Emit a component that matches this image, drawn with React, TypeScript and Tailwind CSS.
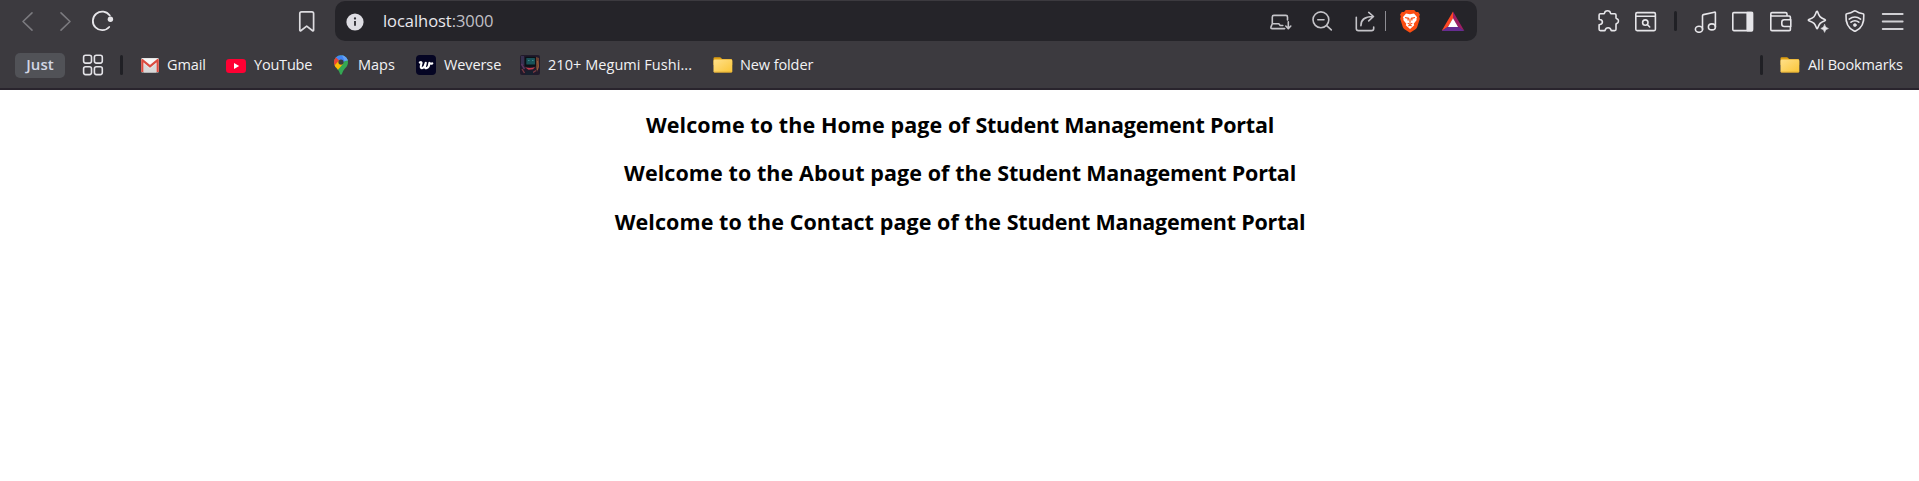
import type { ReactNode } from "react";

type IconProps = { children: ReactNode; className?: string };

/** 24px outlined toolbar icon. */
function Icon({ children, className = "" }: IconProps) {
  return (
    <svg
      viewBox="0 0 24 24"
      className={`h-6 w-6 shrink-0 ${className}`}
      fill="none"
      stroke="currentColor"
      strokeWidth="1.6"
      strokeLinecap="round"
      strokeLinejoin="round"
    >
      {children}
    </svg>
  );
}

function Divider({ className = "" }: { className?: string }) {
  return <div className={`h-5 w-[3px] shrink-0 rounded-sm bg-[#202025] ${className}`} />;
}

function Folder() {
  return (
    <svg viewBox="0 0 20 16" className="h-4 w-5 shrink-0">
      <defs>
        <linearGradient id="folder" x1="0" y1="0" x2="1" y2="1">
          <stop offset="0" stopColor="#ffe08a" />
          <stop offset="1" stopColor="#fac536" />
        </linearGradient>
      </defs>
      <path d="M.5 1.5Q.5.2 1.8.2h5q.8 0 1.2.6l1 1.2h9q1.2 0 1.2 1.3V8H.5z" fill="#dfa012" />
      <rect x=".5" y="2.6" width="18.8" height="13" rx="1.4" fill="url(#folder)" />
      <path d="M1 15.1h17.8" stroke="#dca52d" strokeWidth=".8" />
    </svg>
  );
}

function Label({ children, className }: { children: ReactNode; className: string }) {
  return (
    <span className={`shrink-0 whitespace-nowrap text-[14.5px] leading-5 text-[#f2f2f4] ${className}`}>
      {children}
    </span>
  );
}

function AddressBar() {
  return (
    <div className="ml-4 flex h-10 w-[1142px] shrink-0 items-center rounded-[10px] bg-[#252429] text-[#c4c3c8]">
      <svg viewBox="0 0 18 18" className="ml-[11px] mt-[2px] h-[18px] w-[18px] shrink-0">
        <circle cx="9" cy="9" r="8.6" fill="#dedde3" />
        <path d="M9 8v4.8" stroke="#333238" strokeWidth="1.9" />
        <circle cx="9" cy="5.5" r="1.15" fill="#333238" />
      </svg>
      <span className="ml-[19px] mb-px w-28 shrink-0 whitespace-nowrap text-[16.5px] leading-6 tracking-[-0.05px] text-[#e9e8ed]">
        localhost<span className="text-[#c1c0c6]">:3000</span>
      </span>
      <Icon className="ml-auto">
        <path d="M4.3 14.8V8q0-1.600 1.600-1.600h12q1.600 0 1.600 1.600v3M4.300 14.800h6.500l1.400 1.700h2.600M4.300 14.800L3 17.900q-.5 1.700 1.200 1.700h12.500" />
        <path d="M20.300 12.800v6.600M17.800 17l2.500 2.600 2.500-2.600" />
      </Icon>
      <Icon className="ml-[18px]">
        <circle cx="10.900" cy="10.800" r="7.900" />
        <path d="M7.800 10.800h6.200M16.700 16.700l4.600 4.200" />
      </Icon>
      <Icon className="ml-[19px]">
        <path d="M3.300 8.300v11.100q0 2.200 2.200 2.200h13q2.200 0 2.200-2.200v-1.300" />
        <path d="M7.900 16.800c0-6 3-9.300 12.200-9.300M15.700 3.400l4.800 4.100-4.800 4.400" />
      </Icon>
      <div className="ml-2 h-5 w-px bg-[#8e8d93]" />
      <svg viewBox="0 0 24 24" className="ml-3 h-6 w-6 shrink-0">
        <path
          d="M7.8 1h8.400l1.800 2h2.200l1.700 2.600-.7 2 .6 2.200-2.600 8.300q-.5 1.400-1.700 2.200L12 23.800l-5.500-3.500q-1.200-.8-1.700-2.200L2.200 9.800l.6-2.200-.7-2L3.800 3H6z"
          fill="#fb4d12"
        />
        <path
          d="M8 4.400l4 .8 4-.8 3.100 3.900-.7 1.500.3 1.300-3 3.700.5 1.400-1.400 1.200L12 20l-2.800-2.600-1.400-1.200.5-1.400-3-3.700.3-1.300-.7-1.500z"
          fill="#fff"
        />
        <path
          d="M7 8.500l3.400.8-.5 2.200M17 8.500l-3.400.8.5 2.200M12 9.500v4.200M9.700 14.200l2.300 1 2.300-1M10.400 17l1.600-1.100 1.600 1.100"
          fill="none"
          stroke="#fb4d12"
          strokeWidth="1.200"
        />
      </svg>
      <svg viewBox="0 0 24 24" className="ml-[19px] mr-3 h-6 w-6 shrink-0">
        <path d="M12 2.400v7.100l-5.300 8.800L.6 22z" fill="#ff4724" />
        <path d="M12 2.400v7.100l5.300 8.800 6.100 3.700z" fill="#9e1f63" />
        <path d="M.6 22l6.100-4.200h10.600l6.100 4.200z" fill="#662d91" />
        <path d="M12 9.300l5.100 8.700H6.900z" fill="#fff" />
      </svg>
    </div>
  );
}

function Toolbar() {
  return (
    <div className="flex h-[42px] items-center text-[#e6e5e9]">
      <Icon className="ml-[15px] text-[#7b7a7f]">
        <path d="M17 3.800L8 12.500l9 8.700" />
      </Icon>
      <Icon className="ml-[15px] text-[#7b7a7f]">
        <path d="M7 3.800l9 8.700-9 8.700" />
      </Icon>
      <Icon className="ml-3">
        <path d="M19.200 18a9.300 9.300 0 1 1 .6-11.400" strokeWidth="1.800" />
        <circle cx="20.400" cy="10.200" r="2.700" fill="currentColor" stroke="none" />
      </Icon>
      <Icon className="ml-[181px] text-[#dddce0]">
        <path d="M4.800 4.600q0-1.700 1.700-1.700h10.400q1.700 0 1.700 1.700v16.300q0 1.600-1.300.6l-5.600-4.300-5.600 4.300q-1.300 1-1.300-.6z" strokeWidth="1.700" />
      </Icon>
      <AddressBar />
      <Icon className="ml-[119px]">
        <path d="M4.400 4.800h3.400q.6 0 .7-.7C8.700 2.700 9.800 1.800 11.500 1.800s2.800.9 3 2.300q.1.700.7.700h3.500q1.300 0 1.300 1.300v2.700q0 .6.600.8c1.200.3 1.900 1.200 1.900 2.500s-.7 2.200-1.900 2.500q-.6.200-.6.800v4.900q0 1.300-1.300 1.300h-3q-.6 0-.7-.6c-.3-1.500-1.300-2.300-2.900-2.300s-2.600.8-2.900 2.300q-.1.600-.7.600H4.400q-1.300 0-1.300-1.300v-4.200q0-.6.600-.6c1.700-.2 2.700-1 2.700-2.500s-1-2.300-2.700-2.500q-.6 0-.6-.6V6.100q0-1.300 1.300-1.300z" />
      </Icon>
      <Icon className="ml-[14px]">
        <rect x="1.800" y="3.600" width="19.600" height="18" rx="1.300" />
        <path d="M2 7.300h19.200" />
        <circle cx="11.300" cy="13.600" r="2.700" />
        <path d="M13.500 15.800l2.200 2.200" />
      </Icon>
      <Divider className="ml-4" />
      <Icon className="ml-[17px]">
        <ellipse cx="5" cy="20.300" rx="3.600" ry="3" />
        <ellipse cx="17.900" cy="17.900" rx="3.500" ry="3" />
        <path d="M8.500 20.300V6.700q0-.9.900-1.100l11-2.400q1-.2 1 .7v14" />
      </Icon>
      <Icon className="ml-[13px]">
        <rect x="1.800" y="3.600" width="19.600" height="18" rx="1" />
        <path d="M16.200 3.600h5.200v18h-5.200z" fill="currentColor" />
      </Icon>
      <Icon className="ml-[14px]">
        <path d="M21.400 10.700V8.200q0-1.200-1.200-1.200H3.200q-1.400 0-1.400-1.600v-.6q0-1.200 1.200-1.200h13.500q1.500 0 1.500 1.500V7M1.800 5.400v15q0 1.200 1.200 1.200h17.200q1.200 0 1.200-1.200v-2.600" />
        <path d="M21.800 10.800h-6.600q-2.400 0-2.400 2.400v1.900q0 2.400 2.400 2.400h6.600z" />
      </Icon>
      <Icon className="ml-[13px]">
        <path d="M10.400 2.800q.8-1 1.300.2c1.500 4.600 2.200 5.400 7.100 7.400q1.300.7 0 1.300c-4.700 1.900-5.400 2.800-7.200 7.500q-.5 1.100-1 0c-1.700-4.700-2.500-5.600-7.700-7.500q-1.200-.6 0-1.300C8 8.600 8.800 7.600 10.400 2.800z" />
        <path d="M18.600 15.600q.5 3.200 3.800 3.900-3.300.7-3.800 3.900-.5-3.200-3.800-3.900 3.300-.7 3.800-3.900z" fill="currentColor" strokeWidth=".6" />
      </Icon>
      <Icon className="ml-[13px]">
        <path d="M11.900 1.900q.6 0 1 .3c2 1.500 4.500 2.200 7 2.500q.9.100.9 1c.5 8.200-1.400 13.300-8.100 16.300q-.8.300-1.600 0C4.400 19 2.500 13.900 3 5.700q0-.9.900-1c2.500-.3 5-1 7-2.500q.4-.3 1-.3z" />
        <path d="M6.200 10.100q5.700-4.100 11.400 0M8 13.200q3.900-2.900 7.800 0" />
        <circle cx="11.900" cy="16.100" r="1.500" fill="currentColor" strokeWidth=".6" />
      </Icon>
      <Icon className="ml-[14px] text-[#d0cfd3]">
        <path d="M1.700 5h20M1.700 12.500h20M1.700 20h20" strokeWidth="1.800" />
      </Icon>
    </div>
  );
}

function BookmarksBar() {
  return (
    <div className="flex h-[46px] items-center">
      <div className="ml-[15px] flex h-[25px] w-[50px] shrink-0 items-center justify-center rounded-[5px] bg-[#515257] pb-0.5 text-[15px] font-semibold text-[#d2d6e4]">
        Just
      </div>
      <svg viewBox="0 0 22 22" className="ml-[17px] h-[22px] w-[22px] shrink-0" fill="none" stroke="#e4e3e8" strokeWidth="1.6">
        <rect x="1.600" y="1.200" width="7.900" height="7.900" rx="2" />
        <rect x="12.400" y="1.200" width="7.900" height="7.900" rx="2" />
        <rect x="1.600" y="12.700" width="7.900" height="7.900" rx="2" />
        <rect x="12.400" y="12.700" width="7.900" height="7.900" rx="2" />
      </svg>
      <Divider className="ml-4" />

      <svg viewBox="0 0 20 16" className="ml-[17px] h-4 w-5 shrink-0">
        <rect x="1" y="1" width="18" height="14.500" rx="1.500" fill="#e6e6e6" />
        <path d="M4 15.500V7l6 5 6-5v8.500z" fill="#d8d8d8" />
        <path d="M3 2h14l-7 6.200z" fill="#f6f6f6" />
        <path d="M2.300 15V3L10 9.400 17.700 3v12" fill="none" stroke="#dc4a3e" strokeWidth="2.200" strokeLinejoin="round" />
      </svg>
      <Label className="ml-[7px] w-[59px] tracking-[-0.1px]">Gmail</Label>

      <svg viewBox="0 0 20 14" className="mt-px h-[14px] w-5 shrink-0">
        <rect width="20" height="14" rx="3.300" fill="#ff0033" />
        <path d="M8 4l5.200 3L8 10z" fill="#fff" />
      </svg>
      <Label className="ml-2 w-[79px] tracking-[-0.2px]">YouTube</Label>

      <svg viewBox="0 0 16 20" className="h-5 w-4 shrink-0">
        <defs>
          <clipPath id="pin">
            <path d="M8 .2a7 7 0 0 1 7 7c0 4.300-3.200 5.800-4.800 8.700C9.300 17.500 9 19.800 8 19.800s-1.300-2.300-2.200-3.900C4.200 13 1 11.500 1 7.200a7 7 0 0 1 7-7z" />
          </clipPath>
        </defs>
        <g clipPath="url(#pin)">
          <path d="M0 0h16v20H0z" fill="#34a853" />
          <path d="M0 0h16v3L8 9 3 4z" fill="#4285f4" />
          <path d="M9 0h7v5.500l-4.500.5z" fill="#64a2f5" />
          <path d="M0 0l2.800 2.300L8 7 3 12.800 0 12z" fill="#ea4335" />
          <path d="M1 11l6-6.600 3.400 4.200L4.300 15.500 0 14z" fill="#fbbc04" />
        </g>
        <circle cx="8" cy="7.100" r="2.600" fill="#3c3a3f" />
      </svg>
      <Label className="ml-[9px] w-[57px]">Maps</Label>

      <svg viewBox="0 0 20 20" className="ml-px h-5 w-5 shrink-0">
        <rect width="20" height="20" rx="4" fill="#050523" />
        <path
          d="M3.800 7.500q1.900-.9 1.800.6l-.8 3q-.3 2.500 1.700 2 2.200-.8 3.300-5.300l-.8 3.500q-.3 2.400 1.700 1.800 2.600-1.100 2.700-5.200 1 1.200 2.900.5"
          fill="none"
          stroke="#fff"
          strokeWidth="2.100"
          strokeLinecap="round"
          strokeLinejoin="round"
        />
      </svg>
      <Label className="ml-2 w-[76px] tracking-[-0.1px]">Weverse</Label>

      <svg viewBox="0 0 20 20" className="h-5 w-5 shrink-0">
        <rect width="20" height="20" rx="2" fill="#211a2b" />
        <path d="M1 1h3v9H1z" fill="#37304f" />
        <path d="M16 2l3 1v9l-2 5-1.500-7z" fill="#6b4030" />
        <path d="M17.500 6l.8 5-1 4" stroke="#9a5d3b" fill="none" />
        <path d="M1.500 9l3 5" stroke="#5b3560" strokeWidth="1.600" fill="none" />
        <path d="M2 14l2.500 4M13 17.500l3-2" stroke="#7b3b42" strokeWidth="1.400" />
        <rect x="5" y="1.800" width="11" height="10" rx="1" fill="#0b1117" />
        <rect x="6.300" y="3" width="8.700" height="6.500" rx=".6" fill="#195258" />
        <path d="M8 5.500h1.500M12 5.500h1.500" stroke="#38898c" strokeWidth="1.200" />
        <path d="M5 12.300q5.500 1.500 10-.3l-2 2.200-4.500.6z" fill="#c23c4c" />
        <path d="M6 16h7v4H5z" fill="#17202e" />
      </svg>
      <Label className="ml-2 w-[165px] tracking-[0.05px]">210+ Megumi Fushi...</Label>

      <Folder />
      <Label className="ml-[7px] tracking-[-0.1px]">New folder</Label>

      <Divider className="ml-auto" />
      <div className="ml-[17px] flex shrink-0 items-center">
        <Folder />
        <Label className="ml-2 mr-4 w-[95px] tracking-[-0.15px]">All Bookmarks</Label>
      </div>
    </div>
  );
}

const pages = ["Home page of", "About page of the", "Contact page of the"];

export default function App() {
  return (
    <div className="min-h-[481px] w-full bg-white font-['Open_Sans',sans-serif]">
      <header className="h-[90px] border-b-2 border-[#29242d] bg-[#3c3a3f]">
        <Toolbar />
        <BookmarksBar />
      </header>
      <main className="flex flex-col items-center gap-[18.4px] pt-5 pl-px text-[21.5px] font-bold leading-[30px] text-black">
        {pages.map((page) => (
          <h2 key={page} className="tracking-[0.08px]">
            Welcome to the {page} <span className="tracking-[-0.22px]">Student Management Portal</span>
          </h2>
        ))}
      </main>
    </div>
  );
}
